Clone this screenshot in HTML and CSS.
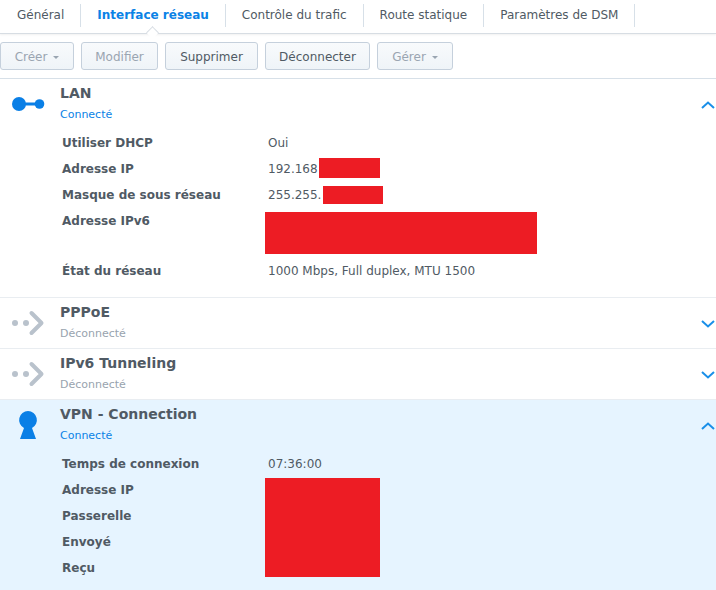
FILE: index.html
```html
<!DOCTYPE html>
<html>
	<head>
		<meta charset="utf-8" />
		<title>Réseau</title>
		<link rel="stylesheet" href="styles.css">
	</head>

	<body>
		<nav class="tabs">
			<a class="tab">Général</a>
			<a class="tab active">Interface réseau</a>
			<a class="tab">Contrôle du trafic</a>
			<a class="tab">Route statique</a>
			<a class="tab">Paramètres de DSM</a>
		</nav>

		<div class="toolbar">
			<button class="btn disabled btn-create">Créer<i class="caret"></i></button>
			<button class="btn disabled btn-edit">Modifier</button>
			<button class="btn btn-delete">Supprimer</button>
			<button class="btn btn-disconnect">Déconnecter</button>
			<button class="btn disabled btn-manage">Gérer<i class="caret"></i></button>
		</div>

		<section class="item item-lan">
			<header class="item-head">
				<svg class="item-icon icon-lan" width="36" height="20" viewBox="0 0 36 20">
					<circle cx="7" cy="10" r="7" fill="#0a7fe6" />
					<rect x="12" y="8.5" width="14" height="3" fill="#0a7fe6" />
					<circle cx="27.5" cy="10" r="4.8" fill="#0a7fe6" />
				</svg>
				<div class="item-title">
					<h2>LAN</h2>
					<span class="status on">Connecté</span>
				</div>
				<svg class="chevron" width="14" height="8" viewBox="0 0 14 8"><path d="M1 7 L7 1.5 L13 7" /></svg>
			</header>
			<div class="details">
				<div class="label">Utiliser DHCP</div><div class="value">Oui</div>
				<div class="label">Adresse IP</div><div class="value">192.168<span class="mask mask-ip"></span></div>
				<div class="label">Masque de sous réseau</div><div class="value">255.255.<span class="mask mask-sub"></span></div>
				<div class="label label-tall">Adresse IPv6</div><div class="value"><span class="mask mask-v6"></span></div>
				<div class="label">État du réseau</div><div class="value">1000 Mbps, Full duplex, MTU 1500</div>
			</div>
		</section>

		<section class="item">
			<header class="item-head">
				<svg class="item-icon" width="36" height="26" viewBox="0 0 36 26">
					<circle cx="3" cy="13" r="3" fill="#b9c2cc" />
					<circle cx="14" cy="13" r="3" fill="#b9c2cc" />
					<path d="M19.5 3 L29.5 13 L19.5 23" fill="none" stroke="#b9c2cc" stroke-width="4" stroke-linecap="round" stroke-linejoin="round" />
				</svg>
				<div class="item-title">
					<h2>PPPoE</h2>
					<span class="status">Déconnecté</span>
				</div>
				<svg class="chevron" width="14" height="8" viewBox="0 0 14 8"><path d="M1 1 L7 6.5 L13 1" /></svg>
			</header>
		</section>

		<section class="item">
			<header class="item-head">
				<svg class="item-icon" width="36" height="26" viewBox="0 0 36 26">
					<circle cx="3" cy="13" r="3" fill="#b9c2cc" />
					<circle cx="14" cy="13" r="3" fill="#b9c2cc" />
					<path d="M19.5 3 L29.5 13 L19.5 23" fill="none" stroke="#b9c2cc" stroke-width="4" stroke-linecap="round" stroke-linejoin="round" />
				</svg>
				<div class="item-title">
					<h2>IPv6 Tunneling</h2>
					<span class="status">Déconnecté</span>
				</div>
				<svg class="chevron" width="14" height="8" viewBox="0 0 14 8"><path d="M1 1 L7 6.5 L13 1" /></svg>
			</header>
		</section>

		<section class="item item-vpn">
			<header class="item-head">
				<svg class="item-icon icon-vpn" width="36" height="28" viewBox="0 0 36 28">
					<path d="M10 0 A9 9 0 0 1 14 17 L18 28 L2 28 L6 17 A9 9 0 0 1 10 0 Z" fill="#0a7fe6" transform="translate(6 0)" />
				</svg>
				<div class="item-title">
					<h2>VPN - Connection</h2>
					<span class="status on">Connecté</span>
				</div>
				<svg class="chevron" width="14" height="8" viewBox="0 0 14 8"><path d="M1 7 L7 1.5 L13 7" /></svg>
			</header>
			<div class="details">
				<div class="label">Temps de connexion</div><div class="value">07:36:00</div>
				<div class="label">Adresse IP</div><div class="value-block"><span class="mask mask-vpn"></span></div>
				<div class="label">Passerelle</div>
				<div class="label">Envoyé</div>
				<div class="label">Reçu</div>
			</div>
		</section>
	</body>
</html>
```

FILE: styles.css
```css
html, body {
	height: 100%;
}

body {
	margin: 0;
	overflow: hidden;
	background: #fff;
	color: #505a64;
	font-family: "DejaVu Sans", sans-serif;
	font-size: 12px;
}

/**
 * Tab strip
 */
.tabs {
	display: flex;
	height: 29px;
	padding-top: 4px;
	border-bottom: 1px solid #d7dde3;
	box-shadow: 0 1px 2px rgba(0, 0, 0, 0.06);
}

.tab {
	position: relative;
	height: 23px;
	padding: 0 16px;
	line-height: 22px;
	border-right: 1px solid #d7e0e8;
	white-space: nowrap;
}

.tab:first-child {
	padding-left: 17px;
}

.tab.active {
	color: #0a82e6;
	font-weight: bold;
}

/* Little notch under the active tab */
.tab.active::after {
	content: "";
	position: absolute;
	left: 50%;
	bottom: -10px;
	width: 8px;
	height: 8px;
	margin-left: -5px;
	background: #fff;
	border-left: 1px solid #d7dde3;
	border-top: 1px solid #d7dde3;
	transform: rotate(45deg);
}

/**
 * Buttons
 */
.toolbar {
	display: flex;
	gap: 7px;
	padding: 8px 0;
	border-bottom: 1px solid #d7e0e8;
}

.btn {
	height: 28px;
	padding: 1px 0 0;
	border: 1px solid #c5d0dc;
	border-radius: 3px;
	background: linear-gradient(#f8fafc, #eff4f8);
	color: #505a64;
	font: inherit;
	text-align: center;
}

.btn.disabled {
	color: #9aa5b1;
}

.btn-create     { width: 74px; }
.btn-edit       { width: 77px; }
.btn-delete     { width: 93px; }
.btn-disconnect { width: 105px; }
.btn-manage     { width: 76px; }

.caret {
	display: inline-block;
	margin-left: 6px;
	vertical-align: middle;
	border-left: 3px solid transparent;
	border-right: 3px solid transparent;
	border-top: 3px solid #9aa5b1;
}

/**
 * Collapsible items
 */
.item {
	border-bottom: 1px solid #e9edf1;
}

.item-lan {
	height: 218px;
}

.item-vpn {
	border-bottom: 0;
	height: 190px;
	background: #e6f4ff;
}

.item-head {
	display: flex;
	height: 50px;
}

.item-icon {
	flex: none;
	width: 36px;
	margin: 12px 0 0 12px;
}

.icon-lan {
	margin-top: 15px;
}

.icon-vpn {
	margin-top: 11px;
}

.item-title {
	flex: 1;
	padding: 6px 0 0 12px;
}

.item-title h2 {
	margin: 0;
	font-size: 14px;
	font-weight: bold;
	line-height: 17px;
}

.status {
	display: block;
	margin-top: 6px;
	color: #98a3ae;
	font-size: 11px;
	line-height: 14px;
}

.status.on {
	color: #0a82e6;
}

.chevron {
	flex: none;
	margin: 22px 1px 0 0;
}

.chevron path {
	fill: none;
	stroke: #1a8fe8;
	stroke-width: 2;
}

.details {
	display: grid;
	grid-template-columns: 206px 1fr;
	padding: 1px 0 0 62px;
	line-height: 26px;
}

.label {
	grid-column: 1;
	height: 26px;
	font-weight: bold;
}

.label-tall {
	height: 50px;
}

.value {
	grid-column: 2;
	white-space: nowrap;
}

.value-block {
	grid-column: 2;
	grid-row: span 4;
}

/* Redacted parts of the screenshot */
.mask {
	display: inline-block;
	background: #ed1c24;
	vertical-align: top;
}

.mask-ip  { width: 61px; height: 20px; margin: 2px 0 0 1px; }
.mask-sub { width: 60px; height: 18px; margin: 4px 0 0 2px; }
.mask-v6  { width: 272px; height: 42px; margin: 4px 0 0 -3px; }
.mask-vpn { width: 115px; height: 99px; margin: 1px 0 0 -3px; }
```
